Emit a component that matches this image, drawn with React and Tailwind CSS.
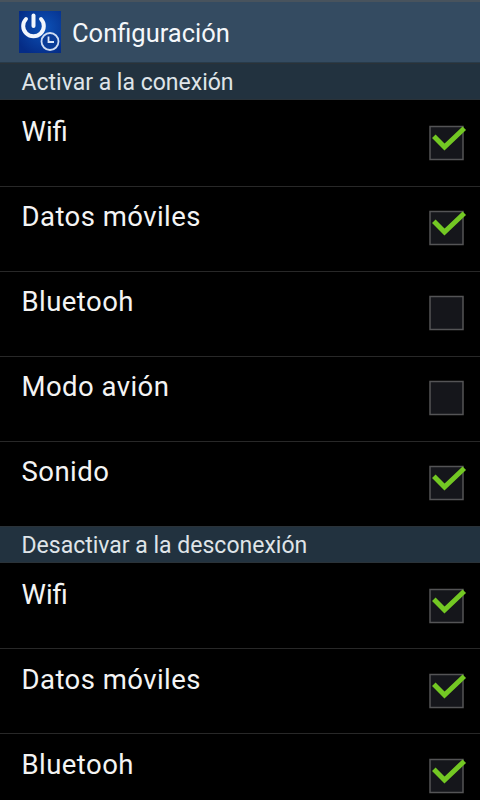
import React from "react";
import clsx from "clsx";

const sections = [
    {
        title: "Activar a la conexión",
        listClass: "pt-px",
        rowClass: "pt-3",
        items: [
            { label: "Wifi", checked: true },
            { label: "Datos móviles", checked: true },
            { label: "Bluetooh", checked: false },
            { label: "Modo avión", checked: false },
            { label: "Sonido", checked: true },
        ],
    },
    {
        title: "Desactivar a la desconexión",
        listClass: "pt-0",
        rowClass: "pt-[13px]",
        items: [
            { label: "Wifi", checked: true },
            { label: "Datos móviles", checked: true },
            { label: "Bluetooh", checked: true },
        ],
    },
];

export default function App() {
    return (
        <div className="w-[480px] h-[800px] overflow-hidden bg-black font-['Roboto',sans-serif]">
            <header className="h-[63px] pl-[19px] flex items-center bg-[#344b61] border-t-2 border-t-[#48535d] border-b border-b-[#283b4a]">
                <AppIcon />
                <h1 className="ml-[11px] mt-[2px] text-[25.5px] leading-8 text-[#f4f7fa] whitespace-nowrap">
                    Configuración
                </h1>
            </header>
            {sections.map((section) => (
                <Section key={section.title} section={section} />
            ))}
        </div>
    );
}

function Section({ section }) {
    return (
        <section>
            <h2 className="h-[37px] pl-[21.5px] pt-[2px] flex items-center bg-[#22323f] border-y border-y-[#2a3238] text-[23px] leading-7 text-[#dfe4e8] whitespace-nowrap">
                {section.title}
            </h2>
            <ul className={section.listClass}>
                {section.items.map((item) => (
                    <SettingRow key={item.label} item={item} className={section.rowClass} />
                ))}
            </ul>
        </section>
    );
}

function SettingRow({ item, className }) {
    return (
        <li
            className={clsx(
                "h-[85px] pl-[21.5px] pr-[11px] flex justify-between items-start border-t border-[#282828] first:border-transparent",
                className
            )}
        >
            {/* tracking would break the fi ligature */}
            <span
                className={clsx(
                    "text-[27.5px] leading-9 text-[#f4f4f4] whitespace-nowrap",
                    !item.label.includes("fi") && "tracking-[0.45px]"
                )}
            >
                {item.label}
            </span>
            <Checkbox checked={item.checked} />
        </li>
    );
}

function Checkbox({ checked }) {
    return (
        <svg className="mt-[7px] w-10 h-10" viewBox="0 0 40 40" fill="none">
            <rect x="1" y="5.5" width="33" height="33" fill="#15161b" stroke="#545456" strokeWidth="1.5" />
            {checked && (
                <path d="M4.8 15.3 L15.5 26 L35.3 7.2" stroke="#73c823" strokeWidth="5" />
            )}
        </svg>
    );
}

function AppIcon() {
    return (
        <svg className="w-[42px] h-[42px]" viewBox="0 0 42 42" fill="none">
            <defs>
                <radialGradient id="iconBg" cx="0.6" cy="0.4" r="0.7">
                    <stop offset="0" stopColor="#0c52b8" />
                    <stop offset="1" stopColor="#052c86" />
                </radialGradient>
            </defs>
            <rect width="42" height="42" fill="url(#iconBg)" />
            <path d="M7 8 A10.3 10.3 0 1 0 22 8" stroke="#f2f6fc" strokeWidth="4" strokeLinecap="round" />
            <path d="M14.5 4.5 V15" stroke="#f2f6fc" strokeWidth="4" strokeLinecap="round" />
            <circle cx="31" cy="30.5" r="8.5" fill="#0a3c98" stroke="#cfdcf2" strokeWidth="1.8" />
            <path d="M29.5 25.5 V31 H35" stroke="#dbe6f8" strokeWidth="1.8" />
        </svg>
    );
}
